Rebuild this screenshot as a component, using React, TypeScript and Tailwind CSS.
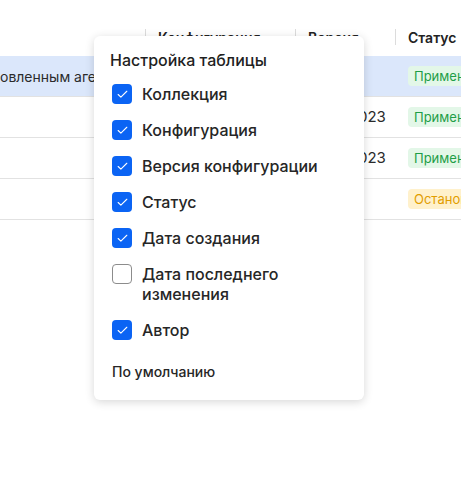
import { Check } from 'lucide-react'

const ROWS = [
  { name: 'овленным агентом', date: '', status: 'Применено', ok: true, active: true },
  { name: '', date: '12.10.2023', status: 'Применено', ok: true, active: false },
  { name: '', date: '12.10.2023', status: 'Применено', ok: true, active: false },
  { name: '', date: '', status: 'Остановлено', ok: false, active: false },
]

const COLUMNS = [
  { label: 'Коллекция', on: true },
  { label: 'Конфигурация', on: true },
  { label: 'Версия конфигурации', on: true },
  { label: 'Статус', on: true },
  { label: 'Дата создания', on: true },
  { label: 'Дата последнего изменения', on: false },
  { label: 'Автор', on: true },
]

function Box({ on }: { on: boolean }) {
  return on ? (
    <span className="flex h-5 w-5 shrink-0 items-center justify-center rounded-[4px] bg-[#0b64f4]">
      <Check className="h-[13px] w-[13px] text-white" strokeWidth={2} />
    </span>
  ) : (
    <span className="h-5 w-5 shrink-0 rounded-[4px] border border-[#8c8c8c] bg-white" />
  )
}

export default function App() {
  return (
    <div
      className="relative h-[488px] w-[461px] overflow-hidden bg-white text-[#2b2b2b]"
      style={{ fontFamily: 'Inter, "Noto Sans", sans-serif' }}
    >
      {/* table behind */}
      <div className="pt-[18px]">
        <div className="flex h-[38px] items-center text-[14px] font-semibold text-[#222]">
          <div className="w-[145px]" />
          <div className="flex w-[150px] items-center gap-3">
            <span className="h-4 w-px bg-[#dcdcdc]" />
            <span>Конфигурация</span>
          </div>
          <div className="flex w-[100px] items-center gap-3">
            <span className="h-4 w-px bg-[#dcdcdc]" />
            <span>Версия</span>
          </div>
          <div className="flex flex-1 items-center gap-3">
            <span className="h-4 w-px bg-[#dcdcdc]" />
            <span>Статус</span>
          </div>
        </div>
        {ROWS.map((r, i) => (
          <div
            key={i}
            className={
              'flex h-[41px] items-center border-b border-[#e2e2e2] text-[14px] whitespace-nowrap ' +
              (r.active ? 'bg-[#dbe7fb]' : '')
            }
          >
            <div className="w-[145px] overflow-hidden">{r.name}</div>
            <div className="w-[150px]" />
            <div className="w-[100px] pl-[16px] text-[15px]">{r.date}</div>
            <div className="flex-1 overflow-hidden pl-[13px]">
              <span
                className={
                  'rounded-[4px] px-[6px] py-[2px] text-[13px] ' +
                  (r.ok ? 'bg-[#e3f7e8] text-[#1e9e47]' : 'bg-[#fff1cc] text-[#e29d00]')
                }
              >
                {r.status}
              </span>
            </div>
          </div>
        ))}
      </div>

      {/* settings popover */}
      <div className="absolute left-[94px] top-[36px] w-[270px] rounded-[6px] bg-white pb-[18px] pl-4 pr-4 pt-[14px] shadow-[0_2px_10px_rgba(0,0,0,0.16)]">
        <div className="text-[16px] font-medium leading-5 text-[#1f1f1f]">Настройка таблицы</div>
        <div className="mt-[14px] flex flex-col gap-4 pl-[2px]">
          {COLUMNS.map((c) => (
            <div key={c.label} className="flex items-start gap-[10px]">
              <Box on={c.on} />
              <span className="w-[190px] text-[16px] font-medium leading-5 text-[#262626]">{c.label}</span>
            </div>
          ))}
        </div>
        <div className="mt-[22px] pl-[2px] text-[14px] font-medium leading-5 text-[#262626]">По умолчанию</div>
      </div>
    </div>
  )
}
